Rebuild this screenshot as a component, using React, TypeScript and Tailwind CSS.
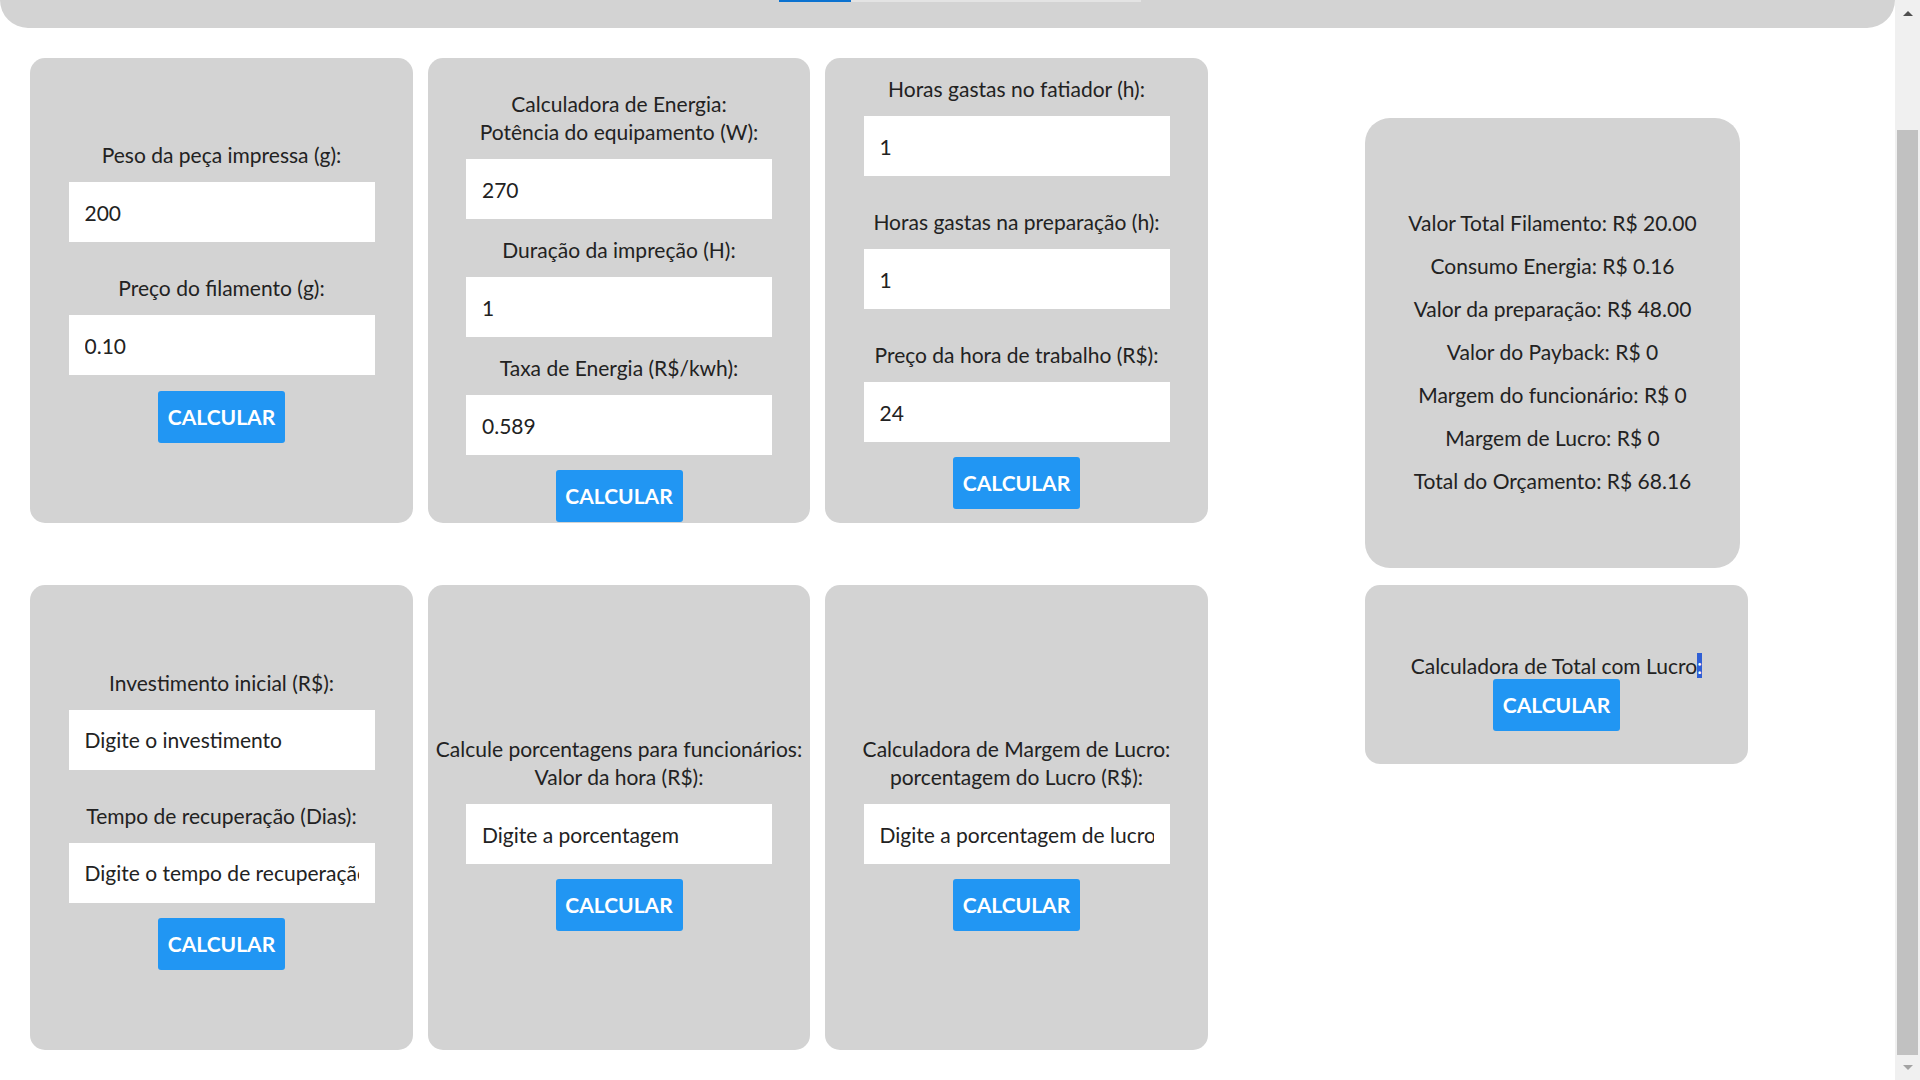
import React from "react";

const Label = ({ children, className = "" }: { children: React.ReactNode; className?: string }) => (
  <p className={`text-center leading-[28px] ${className}`}>{children}</p>
);

const Field = ({ value, placeholder, className = "" }: { value?: string; placeholder?: string; className?: string }) => (
  <input
    readOnly
    defaultValue={value}
    placeholder={placeholder}
    className={`h-[60px] w-[306px] shrink-0 bg-white px-[16px] text-[#222] outline-none placeholder:text-[#222] ${className}`}
  />
);

const Btn = ({ className = "" }: { className?: string }) => (
  <button className={`h-[52px] w-[127px] shrink-0 rounded-[3px] bg-[#2196f3] text-[21px] font-bold text-white ${className}`}>
    CALCULAR
  </button>
);

const Card = ({ children, className = "" }: { children: React.ReactNode; className?: string }) => (
  <div className={`flex h-[465px] flex-col items-center justify-center rounded-[15px] bg-[#d3d3d3] px-[4px] ${className}`}>
    {children}
  </div>
);

export default function App() {
  const results = [
    "Valor Total Filamento: R$ 20.00",
    "Consumo Energia: R$ 0.16",
    "Valor da preparação: R$ 48.00",
    "Valor do Payback: R$ 0",
    "Margem do funcionário: R$ 0",
    "Margem de Lucro: R$ 0",
    "Total do Orçamento: R$ 68.16",
  ];
  return (
    <div className="flex h-screen w-full overflow-hidden bg-white font-[family-name:Lato,sans-serif] text-[21px] text-[#222]">
      <div className="flex min-w-0 flex-1 flex-col">
        <div className="flex h-[28px] w-full shrink-0 justify-center rounded-b-[40px] bg-[#d3d3d3]">
          <div className="ml-[25px] flex h-[2px] w-[362px] bg-[#e3e3e3]">
            <div className="h-[2px] w-[72px] bg-[#0b72d0]" />
          </div>
        </div>
        <div className="flex pl-[30px] pt-[30px]">
          <div className="grid grid-cols-[383px_382px_383px] gap-x-[15px] gap-y-[62px]">
            <Card className="pt-[3px]">
              <Label>Peso da peça impressa (g):</Label>
              <Field value="200" className="mt-[13px]" />
              <Label className="mt-[32px]">Preço do filamento (g):</Label>
              <Field value="0.10" className="mt-[13px]" />
              <Btn className="mt-[16px]" />
            </Card>
            <Card className="pt-[31px]">
              <Label>
                Calculadora de Energia:
                <br />
                Potência do equipamento (W):
              </Label>
              <Field value="270" className="mt-[13px]" />
              <Label className="mt-[17px]">Duração da impreção (H):</Label>
              <Field value="1" className="mt-[13px]" />
              <Label className="mt-[17px]">Taxa de Energia (R$/kwh):</Label>
              <Field value="0.589" className="mt-[13px]" />
              <Btn className="mt-[15px]" />
            </Card>
            <Card className="pt-[3px]">
              <Label>Horas gastas no fatiador (h):</Label>
              <Field value="1" className="mt-[13px]" />
              <Label className="mt-[32px]">Horas gastas na preparação (h):</Label>
              <Field value="1" className="mt-[13px]" />
              <Label className="mt-[32px]">Preço da hora de trabalho (R$):</Label>
              <Field value="24" className="mt-[13px]" />
              <Btn className="mt-[15px]" />
            </Card>
            <Card className="pt-[3px]">
              <Label>Investimento inicial (R$):</Label>
              <Field placeholder="Digite o investimento" className="mt-[13px]" />
              <Label className="mt-[32px]">Tempo de recuperação (Dias):</Label>
              <Field placeholder="Digite o tempo de recuperação" className="mt-[13px]" />
              <Btn className="mt-[15px]" />
            </Card>
            <Card className="pt-[31px]">
              <Label>
                Calcule porcentagens para funcionários:
                <br />
                Valor da hora (R$):
              </Label>
              <Field placeholder="Digite a porcentagem" className="mt-[13px]" />
              <Btn className="mt-[15px]" />
            </Card>
            <Card className="pt-[31px]">
              <Label>
                Calculadora de Margem de Lucro:
                <br />
                porcentagem do Lucro (R$):
              </Label>
              <Field placeholder="Digite a porcentagem de lucro" className="mt-[13px]" />
              <Btn className="mt-[15px]" />
            </Card>
          </div>
          <div className="ml-[157px] flex flex-col">
            <div className="mt-[60px] flex h-[450px] w-[375px] flex-col items-center justify-center gap-[15px] rounded-[25px] bg-[#d3d3d3] pt-[18px]">
              {results.map((r) => (
                <p key={r} className="text-center leading-[28px]">
                  {r}
                </p>
              ))}
            </div>
            <div className="mt-[17px] flex h-[179px] w-[383px] flex-col items-center justify-center rounded-[15px] bg-[#d3d3d3] pt-[34px]">
              <p className="text-center leading-[26px]">
                Calculadora de Total com Lucro<span className="bg-[#2f5fd5] text-white">:</span>
              </p>
              <Btn />
            </div>
          </div>
        </div>
      </div>
      <div className="flex h-full w-[25px] shrink-0 flex-col items-center bg-[#f0f0f0]">
        <div className="flex h-[26px] w-full items-center justify-center">
          <div className="h-0 w-0 border-x-[5px] border-b-[5px] border-x-transparent border-b-[#505050]" />
        </div>
        <div className="mt-[104px] w-[21px] flex-1 bg-[#c1c1c1]" />
        <div className="flex h-[25px] w-full items-center justify-center">
          <div className="h-0 w-0 border-x-[5px] border-t-[5px] border-x-transparent border-t-[#a3a3a3]" />
        </div>
      </div>
    </div>
  );
}
